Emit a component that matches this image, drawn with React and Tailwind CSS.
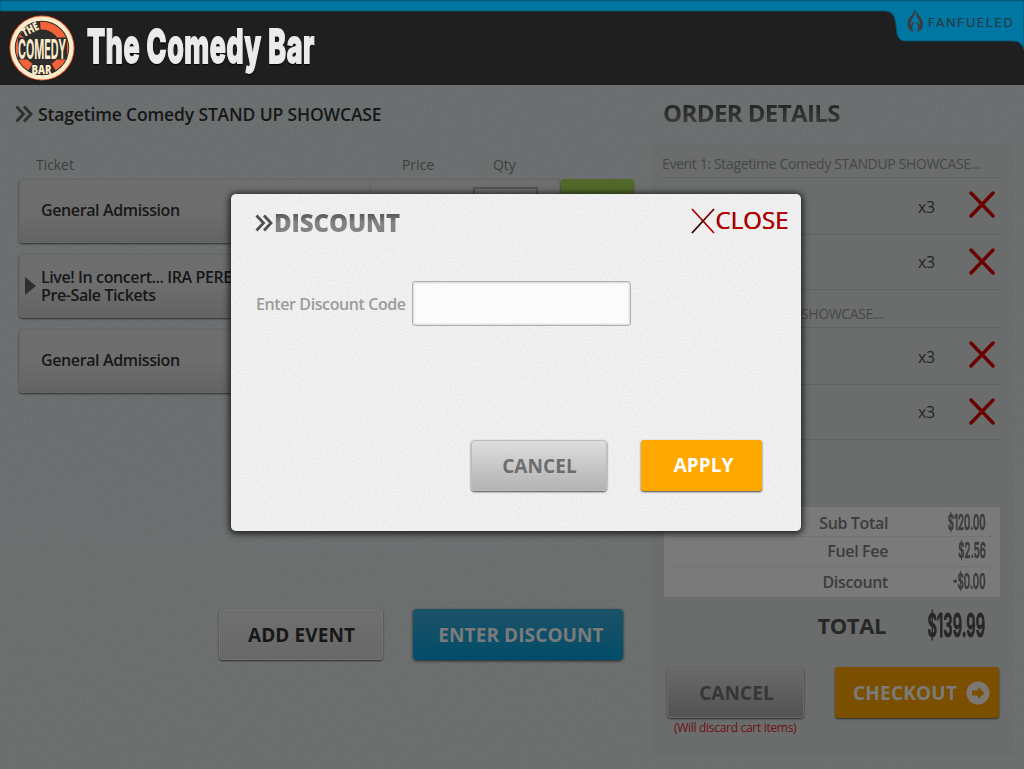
import React from 'react';

const sans = "font-['Open_Sans','Noto_Sans',sans-serif]";

function Condensed({ children, className, scale, origin = 'left center' }) {
  return (
    <span
      className={`inline-block whitespace-nowrap font-['Inter',sans-serif] ${className}`}
      style={{ transform: `scaleX(${scale})`, transformOrigin: origin }}
    >
      {children}
    </span>
  );
}

function Grain({ opacity, id }) {
  return (
    <svg className="pointer-events-none absolute inset-0 h-full w-full" style={{ opacity }} aria-hidden="true">
      <filter id={id} x="0" y="0" width="100%" height="100%">
        <feTurbulence type="fractalNoise" baseFrequency="0.5" numOctaves="2" stitchTiles="stitch" />
        <feColorMatrix type="matrix" values="0 0 0 0 0  0 0 0 0 0  0 0 0 0 0  3 0 0 0 -1.1" />
      </filter>
      <rect width="100%" height="100%" filter={`url(#${id})`} />
    </svg>
  );
}

function BarLogo() {
  return (
    <svg width="66" height="66" viewBox="0 0 66 66" className="block shrink-0">
      <circle cx="33" cy="33" r="32.5" fill="#f15a35" />
      <circle cx="33" cy="33" r="31.6" fill="#fbeccb" />
      <circle cx="33" cy="33" r="27.2" fill="#2e2d2d" />
      <circle cx="33" cy="33" r="26.3" fill="#f4623a" />
      <path d="M33 33 L11 20 A26 26 0 0 1 31 6 Z" fill="#2e2d2d" />
      <path d="M33 33 L19 56 A27 27 0 0 0 47 56 Z" fill="#2e2d2d" />
      <circle cx="33" cy="33" r="18.5" fill="#2e2d2d" />
      <path d="M9 22.500 H58 V44.500 H9 Z" fill="#2e2d2d" />
      <text transform="translate(23 18) rotate(-27)" textAnchor="middle" textLength="17.500" lengthAdjust="spacingAndGlyphs" fontFamily="Open Sans" fontWeight="800" fontSize="11.500" fill="#fbeccb">THE</text>
      <text transform="translate(32.500 58.500)" textAnchor="middle" textLength="20" lengthAdjust="spacingAndGlyphs" fontFamily="Open Sans" fontWeight="800" fontSize="13" fill="#fbeccb">BAR</text>
      <text x="9" y="43.500" textLength="48" lengthAdjust="spacingAndGlyphs" fontFamily="Inter" fontWeight="700" fontSize="27.500" fill="#fbeccb">COMEDY</text>
    </svg>
  );
}

function Header() {
  return (
    <header className="relative flex h-[85px] items-center bg-[#1f1f1f] pl-[9px] pt-[11px]">
      <svg className="absolute left-0 top-0" width="1024" height="60" viewBox="0 0 1024 60">
        <path d="M0 0 H1024 V50 Q1022 41 1013 41 H905 Q899 41 897 34 L895.500 22 Q894 11 885 11 H0 Z" fill="#0077a3" stroke="#07526d" strokeWidth="1" />
        <path d="M0 .5 H1024" stroke="#055a7a" strokeWidth="1.500" />
        <g fill="#3b3a3c">
          <path d="M915 9 C914 15 907 18 907.500 24 C907.500 28 910 31 913.500 32 C911.500 28 912 25 915 22 C912.500 22 911 24 910.300 26 C909.500 20 916 17 915 9 Z" />
          <path d="M915.600 9 C916.600 15 923.400 18 923 24 C923 28 920.500 31 917 32 C919 28 918.500 25 915.600 22 C918 22 919.500 24 920.200 26 C921 20 914.600 17 915.600 9 Z" />
        </g>
        <text x="928" y="27" textLength="86" lengthAdjust="spacingAndGlyphs" fontFamily="Inter" fontSize="11.500" fontWeight="500" letterSpacing="1.200" fill="#253c48">FANFUELED</text>
      </svg>
      <BarLogo />
      <h1 className="ml-[12px] w-[240px] pb-[5px] text-[47px] leading-none text-[#ebebeb]">
        <Condensed scale={0.57} className="font-extrabold tracking-[1.1px] [-webkit-text-stroke:1.8px_#ebebeb] [text-shadow:0_2px_2px_#000]">The Comedy Bar</Condensed>
      </h1>
    </header>
  );
}

function Chevrons({ className }) {
  return (
    <svg width="18" height="18" viewBox="0 0 18 18" className={className} fill="none" stroke="currentColor" strokeWidth="2.800">
      <path d="M1.500 1.500 L8.500 9 L1.500 16.500 M9 1.500 L16 9 L9 16.500" />
    </svg>
  );
}

function TicketCard({ children, arrow, extras }) {
  return (
    <div className="flex h-[64px]">
      <div className="flex w-[541px] items-center rounded-[4px] border border-[#666767] bg-linear-to-b from-[#6e6e6e] via-[#6d6d6d] to-[#636363] shadow-[0_1px_2px_rgba(0,0,0,0.6)]">
        <div className="flex w-[21px] justify-start pl-[5px]">
          {arrow && (
            <svg width="11" height="18" viewBox="0 0 11 18"><path d="M0 0 L11 9 L0 18 Z" fill="#2f2f2f" /></svg>
          )}
        </div>
        <div className={`w-[329px] text-[16px] font-semibold leading-[18px] text-[#171717] ${arrow ? 'tracking-[-0.4px]' : '-mt-[2px] tracking-[-0.38px]'}`}>{children}</div>
        <div className="flex h-full items-start border-l border-[#666] pl-[102px] pt-[7px]">
          {extras && <div className="h-[46px] w-[65px] border-2 border-[#535353] bg-[#6c6d6d]" />}
        </div>
      </div>
      {extras && <div className="ml-px h-[64px] w-[73px] rounded-[3px] bg-[#51682a] shadow-[0_1px_2px_rgba(0,0,0,0.4)]" />}
    </div>
  );
}

function Cross({ className }) {
  return (
    <svg width="26" height="27" viewBox="0 0 26 27" className={`block ${className}`} stroke="#6b0000" strokeWidth="3.400" strokeLinecap="round">
      <path d="M2 2 L24 25 M24 2 L2 25" />
    </svg>
  );
}

function OrderLine({ compact }) {
  return (
    <div className={`flex items-center border-b border-[#606262] pr-[5px] ${compact ? 'h-[55px]' : 'h-[57px]'}`}>
      <span className={`ml-auto w-[51px] text-[16px] tracking-[-0.3px] text-[#242424] ${compact ? '-mt-px' : 'pt-px'}`}>x3</span>
      <Cross className={compact ? '-mt-[2px]' : '-mt-[4px]'} />
    </div>
  );
}

function EventTitle({ children, className = '' }) {
  return (
    <div className={`flex items-end border-b border-[#606262] pb-[3px] text-[14px] leading-[20px] tracking-[-0.35px] text-[#464747] ${className}`}>
      {children}
    </div>
  );
}

function TotalRow({ label, value, className }) {
  return (
    <div className={`mx-[6px] flex h-[30px] items-center border-[#717272] ${className}`}>
      <span className="ml-auto text-[16px] font-semibold leading-[20px] tracking-[-0.35px] text-[#3c3c3c]">{label}</span>
      <span className="flex w-[106px] justify-end pr-[8px] text-[21px] leading-[20px] text-[#3c3c3c]">
        <Condensed scale={0.46} origin="right center" className="font-semibold [-webkit-text-stroke:0.7px_#3c3c3c]">{value}</Condensed>
      </span>
    </div>
  );
}

function Modal() {
  return (
    <div role="dialog" className="absolute left-[231px] top-[194px] flex h-[337px] w-[570px] flex-col overflow-hidden rounded-[5px] bg-[#f1f1f1]">
      <Grain opacity={0.022} id="modalGrain" />
      <div className="relative flex h-[54px] items-center pl-[24px] pr-[12px]">
        <Chevrons className="mt-[4px] text-[#505050]" />
        <h2 className="bg-linear-to-b from-[#505050] from-25% to-[#838383] to-55% bg-clip-text pl-px pt-[4px] text-[24px] font-extrabold leading-[30px] tracking-[-0.1px] text-transparent">DISCOUNT</h2>
        <button className="ml-auto flex items-center text-[24px] font-medium leading-none tracking-[0.1px] text-[#bb0000]">
          <svg width="24" height="26" viewBox="0 0 24 26" fill="none" strokeWidth="1.800" className="-ml-px mr-px">
            <path d="M1 1 L23 25" stroke="#b30000" />
            <path d="M23 1 L12 13" stroke="#700000" />
            <path d="M12 13 L1 25" stroke="#3a0000" />
          </svg>
          <span className="-mt-[3px] [text-shadow:-0.5px_-0.5px_0_#4a0000]">CLOSE</span>
        </button>
      </div>
      <label className="relative mt-[33px] flex items-center pl-[25px] text-[16px] font-semibold tracking-[-0.4px] text-[#9b9b9b]">
        <span className="w-[156px] whitespace-nowrap">Enter Discount Code</span>
        <input className="h-[45px] w-[219px] rounded-[3px] border border-[#b0b0b0] bg-[#fbfbfb] shadow-[inset_0_0_2px_1px_rgba(0,0,0,0.14)]" />
      </label>
      <div className="relative mt-[114px] flex pl-[240px] text-[19px] font-bold">
        <button className="h-[51px] w-[136px] rounded-[4px] border border-[#bcbcbc] bg-linear-to-b from-[#dedede] to-[#b4b2b3] pl-px pt-[2px] tracking-[0.1px] text-[#6d6d6d] shadow-[0_1px_2px_#444]">CANCEL</button>
        <button className="ml-[34px] h-[51px] w-[121px] rounded-[3px] bg-[#ffa800] pl-[4px] text-white shadow-[0_1px_2px_#444]">APPLY</button>
      </div>
    </div>
  );
}

export default function App() {
  return (
    <div className={`relative h-[769px] w-[1024px] overflow-hidden bg-[#6d7071] ${sans}`}>
      <Header />
      <div className="relative flex h-[684px] bg-linear-to-b from-[#6d7172] to-[#6f7171]">
        <Grain opacity={0.03} id="pageGrain" />
        <main className="relative w-[652px]">
          <h2 className="flex h-[59px] items-center pl-[15px] text-[17.500px] font-semibold tracking-[-0.15px] text-[#171717]">
            <Chevrons className="-mt-[2px] mr-[5px] text-[#303030]" />
            Stagetime Comedy STAND UP SHOWCASE
          </h2>
          <div className="flex h-[35px] items-center pl-[36px] pt-[5px] text-[14px] font-medium tracking-[-0.05px] text-[#3d3f3f]">
            <span className="w-[366px]">Ticket</span>
            <span className="w-[91px]">Price</span>
            <span>Qty</span>
          </div>
          <div className="flex flex-col gap-[11px] pl-[19px]">
            <TicketCard extras>General Admission</TicketCard>
            <TicketCard arrow>Live! In concert... IRA PEREZ<br />Pre-Sale Tickets</TicketCard>
            <TicketCard>General Admission</TicketCard>
          </div>
          <div className="mt-[216px] flex gap-[30px] pl-[219px] text-[19px] font-bold">
            <button className="h-[51px] w-[164px] rounded-[4px] border border-[#747474] bg-linear-to-b from-[#707070] to-[#686868] pl-px pt-[2px] tracking-[0.1px] text-[#171717] shadow-[0_1px_2px_#2b2b2b]">ADD EVENT</button>
            <button className="h-[51px] w-[210px] rounded-[4px] bg-linear-to-b from-[#1b5268] to-[#004d69] pl-[6px] pt-[2px] tracking-[0.1px] text-[#7b7b7b] shadow-[0_1px_3px_#222]">ENTER DISCOUNT</button>
          </div>
        </main>
        <aside className="relative w-[362px]">
          <h2 className="flex h-[60px] items-center bg-linear-to-b from-[#242424] from-30% to-[#414141] to-70% bg-clip-text pb-[4px] pl-[11px] text-[24px] font-bold tracking-[-0.6px] text-transparent">ORDER DETAILS</h2>
          <section className="flex h-[611px] flex-col rounded-[4px] bg-[#6a6d6c] pl-[10px] pr-[14px]">
            <EventTitle className="h-[33px]"><span className="whitespace-nowrap">Event 1: Stagetime Comedy STANDUP SHOWCASE...</span></EventTitle>
            <OrderLine />
            <OrderLine compact />
            <EventTitle className="h-[38px]"><span className="w-[221px] whitespace-nowrap text-right">Event 2: Stagetime SHOWCASE...</span></EventTitle>
            <OrderLine />
            <OrderLine compact />
            <div className="ml-[2px] mt-[67px] flex h-[90px] flex-col bg-[#7a7a7a]">
              <TotalRow label="Sub Total" value="$120.00" className="border-b pt-[2px]" />
              <TotalRow label="Fuel Fee" value="$2.56" className="border-b pb-px" />
              <TotalRow label="Discount" value="-$0.00" />
            </div>
            <div className="flex h-[58px] items-center pb-[2px] pr-[15px] text-[#272727]">
              <span className="ml-auto text-[22px] font-bold tracking-[-0.4px]">TOTAL</span>
              <span className="flex w-[99px] justify-end pt-[2px] text-[32px] leading-none">
                <Condensed scale={0.46} origin="right center" className="font-semibold [-webkit-text-stroke:1px_#272727]">$139.99</Condensed>
              </span>
            </div>
            <div className="mt-[12px] flex justify-between pl-[5px] pr-px text-[19px] font-bold">
              <button className="h-[51px] w-[137px] rounded-[4px] border border-[#686868] bg-linear-to-b from-[#696a6a] to-[#535353] pl-[2px] pt-[2px] tracking-[0.1px] text-[#363636] shadow-[0_1px_2px_#2b2b2b]">CANCEL</button>
              <button className="flex h-[51px] w-[164px] items-center rounded-[3px] bg-[#7a5000] pl-[18px] pt-px tracking-[0.2px] text-[#7b7b7b] shadow-[0_1px_2px_#2b2b2b]">
                <span className="pt-px">CHECKOUT</span>
                <svg width="24" height="24" viewBox="0 0 24 24" className="-mt-px ml-[9px]">
                  <circle cx="12" cy="12" r="11.500" fill="#7c7773" />
                  <path d="M6 9.500 H12 V6 L18.500 12 L12 18 V14.500 H6 Z" fill="#7a5000" />
                </svg>
              </button>
            </div>
            <p className="pl-[12px] pt-px text-[12px] leading-[18px] tracking-[-0.3px] text-[#6e1012]">(Will discard cart items)</p>
          </section>
        </aside>
      </div>
      <div className="pointer-events-none absolute left-[231px] top-[194px] h-[337px] w-[570px] rounded-[5px] shadow-[0_1px_6px_2px_rgba(0,0,0,0.7)]" />
      <Modal />
    </div>
  );
}
